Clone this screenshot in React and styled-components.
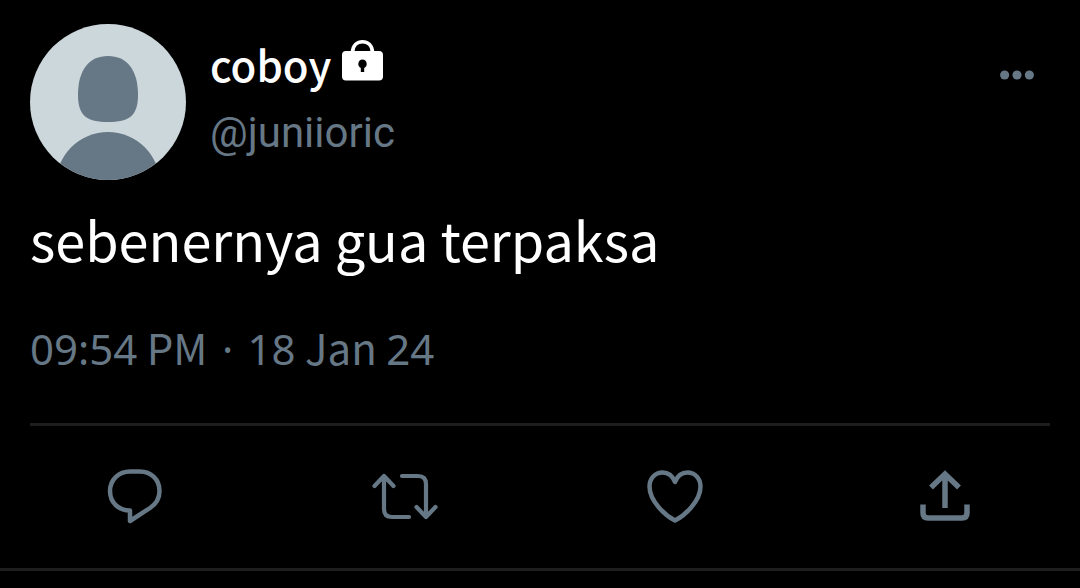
import React from "react";
import styled, { createGlobalStyle } from "styled-components";

const slate = "#667785";
const line = "#1e1e1e";

const GlobalStyle = createGlobalStyle`
  *, *::before, *::after { box-sizing: border-box; }
  body { margin: 0; background: #000; }
`;

const Tweet = styled.article`
  padding-top: 24px;
  background: #000;
  border-bottom: 3px solid ${line};
  font-family: "Noto Sans CJK SC", "Noto Sans", sans-serif;
  color: #fff;
`;

const Header = styled.header`
  display: flex;
  align-items: flex-start;
  gap: 24px;
  padding: 0 30px;
`;

const Avatar = styled.svg`
  display: block;
  flex: none;
  width: 156px;
  height: 156px;
`;

const Author = styled.div`
  flex: 1;
  min-width: 0;
  padding-top: 14px;
`;

const NameRow = styled.div`
  display: flex;
  align-items: flex-start;
  gap: 11px;
`;

const Name = styled.h1`
  margin: 0;
  font-size: 42px;
  font-weight: 500;
  line-height: 52px;
`;

const LockIcon = styled.svg`
  display: block;
  width: 42px;
  height: 48px;
`;

const Handle = styled.a`
  display: block;
  margin-top: 11px;
  font-family: Roboto, sans-serif;
  font-size: 42px;
  line-height: 64px;
  color: ${slate};
  text-decoration: none;
`;

const IconButton = styled.button`
  display: flex;
  align-items: center;
  justify-content: center;
  padding: 0;
  border: 0;
  background: none;
  color: ${slate};
  cursor: pointer;
`;

const MoreButton = styled(IconButton)`
  width: 66px;
  height: 102px;
`;

const Message = styled.p`
  margin: 0;
  padding: 17px 30px 0;
  font-size: 54px;
  line-height: 84px;
`;

const Posted = styled.time`
  display: block;
  margin: 34px 30px 0;
  padding-bottom: 44px;
  border-bottom: 3px solid ${line};
  font-size: 42px;
  line-height: 64px;
  color: ${slate};
`;

const Digits = styled.span`
  font-family: "Noto Sans", sans-serif;
  line-height: 1;
`;

const Dot = styled(Digits)`
  margin: 0 5px;
`;

const Actions = styled.div`
  display: grid;
  grid-template-columns: repeat(4, 1fr);
`;

const Action = styled(IconButton)`
  height: 142px;
`;

const Icon = styled.svg`
  display: block;
  width: 72px;
  height: 72px;
  fill: none;
  stroke: currentColor;
  stroke-width: ${(p) => p.$stroke || 4};
`;

export default function App() {
  return (
    <>
      <GlobalStyle />
      <Tweet>
        <Header>
          <Avatar viewBox="0 0 156 156" role="img" aria-label="Profile picture">
            <clipPath id="face">
              <circle cx="78" cy="78" r="78" />
            </clipPath>
            <g clipPath="url(#face)">
              <rect width="156" height="156" fill="#ccd7db" />
              <path
                d="M78 32C97 32 108 46 108 71C108 92 99 98 78 98C57 98 48 92 48 71C48 46 59 32 78 32Z"
                fill={slate}
              />
              <circle cx="78" cy="160" r="52" fill={slate} />
            </g>
          </Avatar>
          <Author>
            <NameRow>
              <Name>coboy</Name>
              <LockIcon viewBox="0 0 42 48" role="img" aria-label="Protected account">
                <path d="M10.500 17V14.500C10.500 0 30.500 0 30.500 14.500V17" fill="none" stroke="#fff" strokeWidth="3.500" />
                <path
                  fill="#fff"
                  fillRule="evenodd"
                  d="M4 13H37Q41 13 41 17V38.500Q41 42.500 37 42.500H4Q0 42.500 0 38.500V17Q0 13 4 13ZM20.500 21.500A4.500 4.500 0 0 0 18.800 30V34H22.200V30A4.500 4.500 0 0 0 20.500 21.500Z"
                />
              </LockIcon>
            </NameRow>
            <Handle href="#profile">@juniioric</Handle>
          </Author>
          <MoreButton aria-label="More">
            <Icon viewBox="0 0 72 72">
              <g fill="currentColor" stroke="none">
                <circle cx="22.500" cy="36" r="5" />
                <circle cx="36" cy="36" r="5" />
                <circle cx="49.500" cy="36" r="5" />
              </g>
            </Icon>
          </MoreButton>
        </Header>
        <Message>sebenernya gua terpaksa</Message>
        <Posted dateTime="2024-01-18T21:54">
          <Digits>09:54</Digits> PM <Dot>·</Dot> <Digits>18</Digits> Jan <Digits>24</Digits>
        </Posted>
        <Actions>
          <Action aria-label="Reply">
            <Icon viewBox="0 0 72 72" $stroke={4.5}>
              <path
                d="M31 10.500H41C52 10.500 60.500 18.500 60.500 30C60.500 37 57 43 51 47L31 60V49.500C19 49.500 11 41 11 30C11 19 19.500 10.500 31 10.500Z"
                strokeLinejoin="round"
              />
            </Icon>
          </Action>
          <Action aria-label="Repost">
            <Icon viewBox="0 0 72 72" $stroke={4.2} strokeLinecap="round" strokeLinejoin="round">
              <path d="M5.500 25L15 15L24.500 25M15 16V48Q15 56 23 56H40M33 15H49Q57 15 57 23V56M47.500 46L57 56L66.500 46" />
            </Icon>
          </Action>
          <Action aria-label="Like">
            <Icon viewBox="0 0 72 72" $stroke={4.5}>
              <path
                d="M36 21C33.500 14.500 28.500 11.500 23.500 11.500C16 11.500 10.500 17.500 10.500 25.500C10.500 40.500 27 55 36 59.500C45 55 61.500 40.500 61.500 25.500C61.500 17.500 56 11.500 48.500 11.500C43.500 11.500 38.500 14.500 36 21Z"
                strokeLinejoin="round"
              />
            </Icon>
          </Action>
          <Action aria-label="Share">
            <Icon viewBox="0 0 72 72" $stroke={5.5}>
              <path d="M22 26.500L36 13L50 26.500M36 13V47M14 43.500V52Q14 57 19 57H53Q58 57 58 52V43.500" />
            </Icon>
          </Action>
        </Actions>
      </Tweet>
    </>
  );
}
